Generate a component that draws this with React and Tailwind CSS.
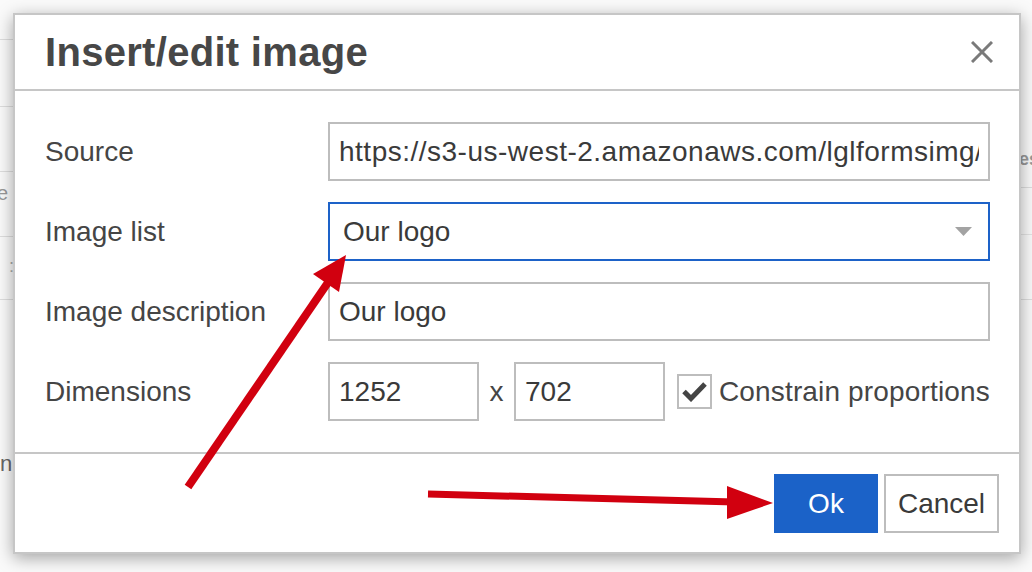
import React from "react";

const font = { fontFamily: '"Liberation Sans", Arial, Helvetica, sans-serif' };

function Field({ label, children }) {
  return (
    <div className="grid h-[59px] grid-cols-[283px_1fr] items-center">
      <span className="text-[28px] text-[#454545]">{label}</span>
      {children}
    </div>
  );
}

function TextBox({ value, className = "" }) {
  return (
    <input
      readOnly
      value={value}
      className={`h-[59px] w-full border-2 border-[#bdbdbd] bg-white px-[9px] text-[28px] text-[#3a3a3a] outline-none ${className}`}
      style={font}
    />
  );
}

function Backdrop() {
  return (
    <div className="flex h-full w-full justify-between bg-[#fafafa]">
      <div className="flex w-[13px] flex-col">
        <div className="h-[40px] border-b border-[#dedede]" />
        <div className="h-[67px] border-b border-[#dedede]" />
        <div className="h-[65px] border-b border-[#dedede]" />
        <div className="flex h-[65px] items-center border-b border-[#dedede] pb-[22px] text-[20px] leading-none text-[#999]">
          <span className="-ml-[3px]">e</span>
        </div>
        <div className="flex h-[63px] items-start border-b border-[#dedede] pt-[20px] pl-[9px]">
          <span className="text-[18px] leading-none text-[#aaa]">:</span>
        </div>
        <div className="pt-[153px] text-[22px] leading-none text-[#666]">n</div>
      </div>
      <div className="flex w-[12px] flex-col">
        <div className="h-[150px]" />
        <div className="h-[38px] overflow-hidden border-b border-[#dedede] text-[18px] leading-none text-[#999]">
          <span className="-ml-[1px] font-bold">es</span>
        </div>
        <div className="h-[47px] border-b border-[#e4e4e4]" />
        <div className="h-[65px] border-b border-[#dedede]" />
      </div>
    </div>
  );
}

function Arrows() {
  return (
    <svg className="pointer-events-none absolute left-0 top-0" width="1032" height="572" viewBox="0 0 1032 572">
      <line x1="188" y1="487" x2="329" y2="281" stroke="#d1000f" strokeWidth="8" />
      <polygon points="346,255 339,292 313,274" fill="#d1000f" />
      <line x1="428" y1="494" x2="735" y2="502" stroke="#d1000f" strokeWidth="7" />
      <polygon points="773,503 727,486 727,519" fill="#d1000f" />
    </svg>
  );
}

export default function App() {
  return (
    <div className="relative h-[572px] w-[1032px] overflow-hidden bg-white" style={font}>
      <Backdrop />

      <div className="absolute left-[13px] top-[13px] flex h-[541px] w-[1008px] flex-col border-2 border-[#c6c6c6] bg-white shadow-[0_4px_16px_rgba(0,0,0,0.35)]">
        <div className="flex h-[76px] items-center justify-between border-b-2 border-[#c6c6c6] pl-[30px] pr-[26px]">
          <h1 className="text-[40px] font-bold leading-none tracking-[0.3px] text-[#474747]">Insert/edit image</h1>
          <svg width="22" height="22" viewBox="0 0 22 22">
            <path d="M1 1 L21 21 M21 1 L1 21" stroke="#7a7a7a" strokeWidth="3" />
          </svg>
        </div>

        <div className="flex flex-col gap-[21px] py-[31px] pl-[30px] pr-[29px]">
          <Field label="Source">
            <TextBox
              value="https://s3-us-west-2.amazonaws.com/lglformsimg/.logo.png"
              className="tracking-[0.5px]"
            />
          </Field>
          <Field label="Image list">
            <div className="flex h-[59px] items-center justify-between border-2 border-[#1d62c8] pl-[13px] pr-[16px]">
              <span className="text-[28px] text-[#3a3a3a]">Our logo</span>
              <svg width="17" height="9" viewBox="0 0 17 9">
                <polygon points="0,0 17,0 8.5,9" fill="#a3a3a3" />
              </svg>
            </div>
          </Field>
          <Field label="Image description">
            <TextBox value="Our logo" />
          </Field>
          <Field label="Dimensions">
            <div className="flex items-center">
              <TextBox value="1252" className="!w-[151px]" />
              <span className="w-[35px] text-center text-[28px] text-[#454545]">x</span>
              <TextBox value="702" className="!w-[151px]" />
              <div className="ml-[12px] flex h-[35px] w-[35px] items-center justify-center border-2 border-[#bdbdbd]">
                <svg width="25" height="21" viewBox="0 0 25 21">
                  <path d="M2 10.5 L9 17.5 L23 3" fill="none" stroke="#444" strokeWidth="5" />
                </svg>
              </div>
              <span className="ml-[7px] text-[28px] tracking-[0.15px] text-[#454545]">Constrain proportions</span>
            </div>
          </Field>
        </div>

        <div className="flex flex-1 items-start justify-end gap-[6px] border-t-2 border-[#c6c6c6] pr-[20px] pt-[20px]">
          <button className="h-[59px] w-[104px] bg-[#1b62c8] text-[28px] text-white">Ok</button>
          <button className="h-[59px] w-[115px] border-2 border-[#bdbdbd] bg-white text-[28px] text-[#3a3a3a]">
            Cancel
          </button>
        </div>
      </div>

      <Arrows />
    </div>
  );
}
